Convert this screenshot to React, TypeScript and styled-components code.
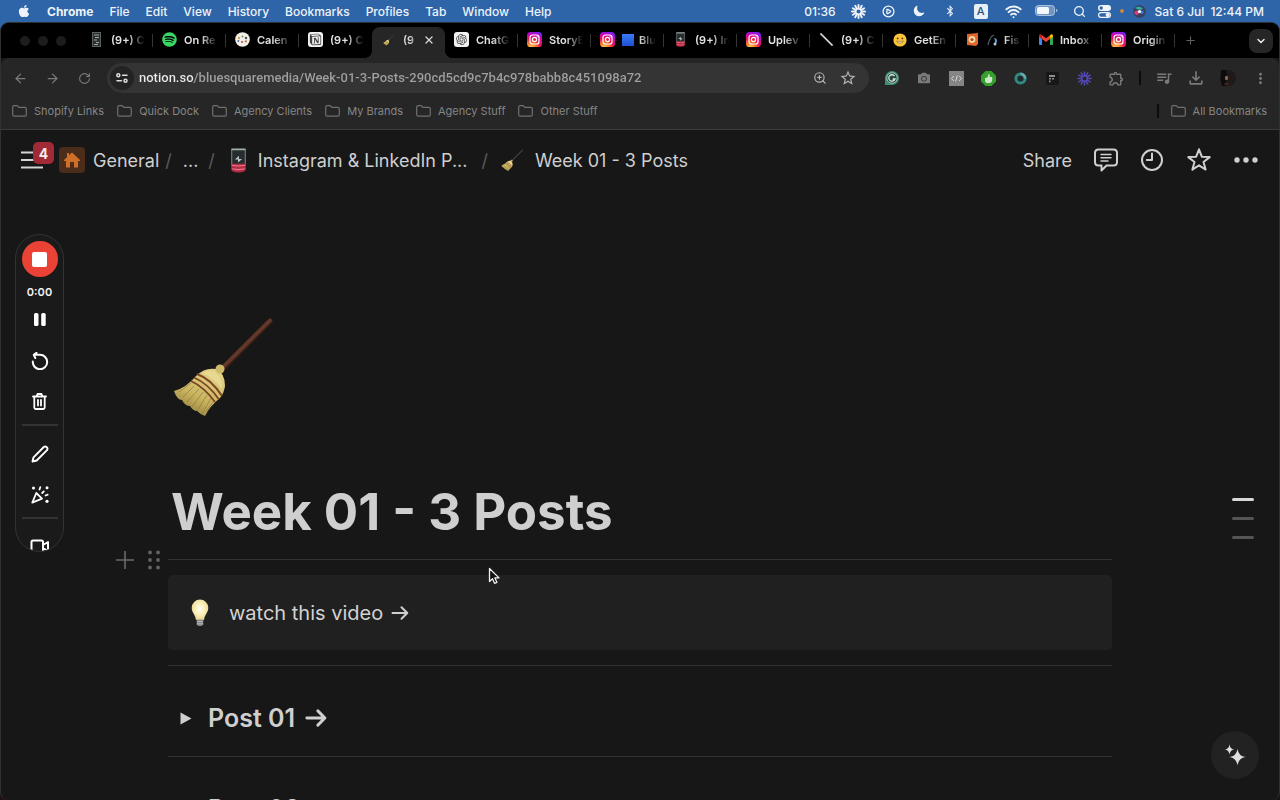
import React from "react";
import styled, { createGlobalStyle, css } from "styled-components";
import {
  ArrowLeft,
  ArrowRight,
  RotateCw,
  Search,
  Wifi,
  CirclePlay,
  ChevronDown,
  Plus,
  X,
  ZoomIn,
} from "lucide-react";
import { FaApple, FaSpotify, FaBluetoothB, FaCamera } from "react-icons/fa";
import { RiNotionFill, RiOpenaiFill } from "react-icons/ri";
import {
  MdQueueMusic,
  MdOutlineFileDownload,
  MdOutlineExtension,
  MdStarBorder,
  MdMoreVert,
} from "react-icons/md";
import { IoMoon } from "react-icons/io5";

const Global = createGlobalStyle`
  *, *::before, *::after { box-sizing: border-box; }
  html, body { margin: 0; height: 100%; }
  body {
    background: #1d1412;
    font-family: Inter, "Liberation Sans", sans-serif;
    color: #d2d2d2;
    overflow: hidden;
  }
  button, input { font: inherit; color: inherit; }
  svg { display: block; flex: none; }
`;

const Desktop = styled.div`
  display: flex;
  flex-direction: column;
  height: 100vh;
  background: linear-gradient(#2e65a8 0 60px, #1d1412 60px);
`;

const bareButton = css`
  display: flex;
  align-items: center;
  justify-content: center;
  padding: 0;
  border: 0;
  background: none;
  white-space: nowrap;
  cursor: pointer;
`;

/* ---------- macOS menu bar ---------- */

const MenuBar = styled.header`
  display: flex;
  align-items: center;
  flex: none;
  height: 22px;
  padding: 0 16px 0 17px;
  color: #eef3fa;
  font-size: 12px;
  font-weight: 500;
`;

const Menus = styled.nav`
  display: flex;
  align-items: center;
  gap: 16px;
  flex: 1;
`;

const MenuButton = styled.button<{ $strong?: boolean }>`
  ${bareButton}
  font-weight: ${(p) => (p.$strong ? 700 : 500)};
`;

const Status = styled.div`
  display: flex;
  align-items: center;
`;

const StatusSlot = styled.span<{ $w?: number }>`
  display: flex;
  align-items: center;
  justify-content: center;
  width: ${(p) => p.$w ?? 31}px;
`;

const InputSource = styled.span`
  display: grid;
  place-items: center;
  width: 14px;
  height: 15px;
  border-radius: 2px;
  background: #e8eef6;
  color: #2c4f7c;
  font-size: 11px;
`;

const DateTime = styled.time`
  display: flex;
  gap: 6px;
  white-space: nowrap;
`;

/* ---------- Browser window ---------- */

const Window = styled.div`
  position: relative;
  display: flex;
  flex-direction: column;
  flex: 1;
  min-height: 0;
  border: 1px solid #2f3133;
  border-bottom: 0;
  border-radius: 9px 9px 8px 8px;
  background: #171717;
  overflow: hidden;
`;

const TabStrip = styled.div`
  display: flex;
  align-items: stretch;
  flex: none;
  height: 35px;
  padding: 0 6px 0 19px;
  background: #000;
`;

const Lights = styled.div`
  display: flex;
  align-items: center;
  gap: 8px;
  width: 60px;
`;

const Light = styled.span`
  width: 10px;
  height: 10px;
  border-radius: 50%;
  background: #1d1d1d;
`;

const TabButton = styled.button<{ $active?: boolean; $line?: boolean }>`
  ${bareButton}
  position: relative;
  justify-content: flex-start;
  flex: 0 1 73px;
  min-width: 0;
  gap: 7px;
  padding: 0 8px 2px 9px;
  color: #e2e2e2;
  font-size: 11px;
  font-weight: 600;

  ${(p) =>
    p.$line &&
    css`
      &::after {
        content: "";
        position: absolute;
        right: 0;
        top: 11px;
        width: 1px;
        height: 13px;
        background: #353535;
      }
    `}

  ${(p) =>
    p.$active &&
    css`
      margin-top: 4px;
      border-radius: 8px 8px 0 0;
      background: #262626;
      color: #d8d8d8;
      padding-right: 10px;
      padding-bottom: 6px;
      &::before,
      &::after {
        content: "";
        position: absolute;
        bottom: 0;
        width: 8px;
        height: 8px;
      }
      &::before {
        left: -8px;
        background: radial-gradient(circle at 0 0, #000 8px, #262626 8px);
      }
      &::after {
        right: -8px;
        background: radial-gradient(circle at 100% 0, #000 8px, #262626 8px);
      }
    `}
`;

const TabText = styled.span`
  display: flex;
  align-items: center;
  gap: 5px;
  flex: 1;
  overflow: hidden;
  mask-image: linear-gradient(90deg, #000 50%, transparent 100%);
`;

const Blue = styled.span`
  flex: none;
  width: 12px;
  height: 12px;
  background: linear-gradient(#3a7af5, #1e50d8);
`;

const NewTab = styled.button`
  ${bareButton}
  width: 30px;
  color: #606060;
`;

const TabSearch = styled.button`
  ${bareButton}
  align-self: center;
  width: 24px;
  height: 24px;
  margin-left: auto;
  border-radius: 8px;
  background: #262626;
  color: #e8e8e8;
`;

const Toolbar = styled.div`
  display: flex;
  align-items: center;
  flex: none;
  height: 41px;
  padding: 0 3px 1px 3px;
  border-radius: 8px 8px 0 0;
  background: #262626;
`;

const Slot = styled.button<{ $w?: number; $c?: string }>`
  ${bareButton}
  flex: none;
  width: ${(p) => p.$w ?? 32}px;
  height: 28px;
  color: ${(p) => p.$c ?? "#7a7a7a"};
`;

const Omnibox = styled.div`
  display: flex;
  align-items: center;
  flex: 1;
  min-width: 0;
  height: 30px;
  margin: 0 7px;
  padding: 0 7px 0 3px;
  border-radius: 15px;
  background: #343434;
`;

const SiteInfo = styled.button`
  ${bareButton}
  width: 24px;
  height: 24px;
  border-radius: 50%;
  background: #232323;
`;

const UrlInput = styled.input`
  flex: 1;
  min-width: 0;
  margin-left: 5px;
  padding: 0;
  border: 0;
  outline: 0;
  font-family: Roboto, sans-serif;
  font-size: 13px;
  font-weight: 500;
  line-height: 20px;
  background: linear-gradient(90deg, #ececec 55px, #a0a0a0 55px);
  background-clip: text;
  -webkit-background-clip: text;
  -webkit-text-fill-color: transparent;
`;

const Bar = styled.span<{ $m: number }>`
  width: 2px;
  height: 14px;
  margin: 0 ${(p) => p.$m}px;
  background: #0c0c0c;
`;

const BookmarkBar = styled.nav`
  display: flex;
  align-items: center;
  gap: 13px;
  flex: none;
  height: 31px;
  padding: 0 12px 6px 11px;
  border-bottom: 1px solid #3b3b3b;
  background: #262626;
`;

const Bookmark = styled.a`
  display: flex;
  align-items: center;
  gap: 7px;
  color: #858585;
  font-size: 11px;
  text-decoration: none;
  white-space: nowrap;
`;

const BookmarkEnd = styled.div`
  display: flex;
  align-items: center;
  margin-left: auto;
`;

/* ---------- Notion page ---------- */

const TopBar = styled.div`
  display: flex;
  align-items: center;
  flex: none;
  height: 60px;
  padding: 0 21px 0 20px;
  font-size: 18px;
`;

const SidebarToggle = styled.button`
  ${bareButton}
  position: relative;
  width: 23px;
  height: 26px;
`;

const Badge = styled.span`
  position: absolute;
  left: 12px;
  top: -5px;
  display: grid;
  place-items: center;
  width: 21px;
  height: 22px;
  border-radius: 5px;
  background: #a02a36;
  color: #f5e9ea;
  font-size: 14px;
  font-weight: 700;
`;

const HomeBox = styled.span`
  display: grid;
  place-items: center;
  width: 26px;
  height: 26px;
  margin: 0 8px 0 15px;
  border-radius: 4px;
  background: #4c2d1b;
`;

const Crumb = styled.a`
  display: flex;
  align-items: center;
  gap: 11px;
  color: #cfcfcf;
  text-decoration: none;
  white-space: nowrap;
`;

const Slash = styled.span<{ $l: number; $r: number }>`
  margin: 0 ${(p) => p.$r}px 0 ${(p) => p.$l}px;
  color: #5a5a5a;
`;

const Actions = styled.div`
  display: flex;
  align-items: center;
  gap: 22px;
  margin-left: auto;
`;

const Action = styled.button`
  ${bareButton}
  color: #cfcfcf;
`;

const Page = styled.main`
  flex: 1;
  min-height: 0;
  width: 100%;
  max-width: 1280px;
  margin: 0 auto;
  padding: 126px 167px 0;
  overflow: hidden;
`;

const PageIcon = styled.div`
  padding-left: 4px;
`;

const Title = styled.h1`
  margin: 60px 0 0;
  padding-left: 3px;
  color: #cfcfcf;
  font-size: 51px;
  line-height: 64px;
  font-weight: 700;
  white-space: nowrap;
`;

const Block = styled.div`
  position: relative;
`;

const Handles = styled.div`
  position: absolute;
  right: 100%;
  top: 50%;
  display: flex;
  align-items: center;
  gap: 14px;
  padding-right: 8px;
  transform: translateY(-50%);
`;

const Rule = styled.hr`
  height: 1px;
  margin: 15px 0;
  border: 0;
  background: #323232;
`;

const Callout = styled.section`
  display: flex;
  align-items: center;
  gap: 20px;
  height: 75px;
  padding: 0 23px;
  border-radius: 5px;
  background: #202020;
  font-size: 20px;
`;

const Arrowed = styled.span<{ $gap: number }>`
  display: flex;
  align-items: center;
  gap: ${(p) => p.$gap}px;
`;

const ToggleRow = styled.button`
  ${bareButton}
  justify-content: flex-start;
  gap: 16px;
  width: 100%;
  height: 60px;
  padding: 14px 0 0 12px;
  color: #cfcfcf;
  font-size: 25px;
  font-weight: 600;
`;

/* ---------- Overlays ---------- */

const Recorder = styled.aside`
  position: absolute;
  left: 14px;
  top: 211px;
  display: flex;
  flex-direction: column;
  align-items: center;
  width: 49px;
  height: 318px;
  padding-top: 6px;
  border: 1px solid #333;
  border-radius: 25px;
  background: #1a1a1a;
  color: #f4f4f4;
  overflow: hidden;
`;

const StopButton = styled.button`
  ${bareButton}
  flex: none;
  width: 36px;
  height: 36px;
  border-radius: 50%;
  background: #ea4335;

  &::before {
    content: "";
    width: 15px;
    height: 15px;
    border-radius: 2px;
    background: #fff;
  }
`;

const Elapsed = styled.time`
  margin: 8px 0 0;
  font-size: 11px;
  line-height: 14px;
  font-weight: 600;
`;

const Tool = styled.button`
  ${bareButton}
  flex: none;
  width: 36px;
  height: 41px;
`;

const ToolRule = styled.hr`
  flex: none;
  width: 36px;
  height: 2px;
  margin: 2px 0 7px;
  border: 0;
  background: #333;
`;

const Outline = styled.nav`
  position: absolute;
  right: 25px;
  top: 475px;
  display: flex;
  flex-direction: column;
  gap: 16px;
`;

const OutlineMark = styled.a<{ $on?: boolean }>`
  width: 22px;
  height: 3px;
  border-radius: 2px;
  background: ${(p) => (p.$on ? "#d8d8d8" : "#555")};
`;

const AiButton = styled.button`
  ${bareButton}
  position: absolute;
  right: 20px;
  bottom: 21px;
  width: 48px;
  height: 48px;
  border-radius: 50%;
  background: #222;
`;

const Pointer = styled.svg`
  position: absolute;
  left: 487px;
  top: 544px;
`;

/* ---------- Drawings ---------- */

const Folder = () => (
  <svg width="15" height="12" viewBox="0 0 15 12" fill="none" stroke="#707070" strokeWidth="1.2" strokeLinejoin="round">
    <path d="M.7 2.2q0-1.5 1.5-1.5h2.6q.6 0 1 .5l1 1.2h6q1.5 0 1.5 1.5v5.8q0 1.5-1.5 1.5H2.2q-1.5 0-1.5-1.5z" />
  </svg>
);

const Insta = () => (
  <svg width="15" height="15" viewBox="0 0 15 15">
    <defs>
      <radialGradient id="ig" cx=".28" cy="1.05" r="1.1">
        <stop offset="0" stopColor="#ffd45a" />
        <stop offset=".3" stopColor="#fb7a2c" />
        <stop offset=".55" stopColor="#e8184f" />
        <stop offset=".8" stopColor="#d400b8" />
        <stop offset="1" stopColor="#7a1ff0" />
      </radialGradient>
    </defs>
    <rect width="15" height="15" rx="3.6" fill="url(#ig)" />
    <rect x="3" y="3" width="9" height="9" rx="2.6" fill="none" stroke="#fff" strokeWidth="1.2" />
    <circle cx="7.5" cy="7.5" r="2.1" fill="none" stroke="#fff" strokeWidth="1.2" />
    <circle cx="10.1" cy="4.9" r=".6" fill="#fff" />
  </svg>
);

const Broom = ({ size, handle = "#63382b", edge = "#3a1f17" }: { size: number; handle?: string; edge?: string }) => (
  <svg width={size} height={size} viewBox="0 0 104 104">
    <defs>
      <linearGradient id="straw" x1=".75" y1=".1" x2=".25" y2="1">
        <stop offset="0" stopColor="#e2d184" />
        <stop offset=".55" stopColor="#c9b45f" />
        <stop offset="1" stopColor="#8f7c3a" />
      </linearGradient>
    </defs>
    <path d="M49 54 98 5" stroke={edge} strokeWidth="5.500" strokeLinecap="round" />
    <path d="M49 53 98 4.500" stroke={handle} strokeWidth="3.600" strokeLinecap="round" />
    <path d="M24 60q9-9 20-7 9 4 9 17-1 7-5 12-10 8-15 18-4-1-8-5-4 0-7-5-5 0-8-6-5 0-8-9 12-3 22-15z" fill="url(#straw)" />
    <path d="M30 57q8-4 14 0 7 7 6 16-8-11-20-16z" fill="#eadb96" opacity=".8" />
    <path
      d="M19 67 7 76M22 70 11 81M27 73 15 86M31 76 20 91M35 79 25 95M39 82 30 98M42 84 34 96"
      stroke="#86733a"
      strokeWidth="1"
      fill="none"
      opacity=".6"
    />
    <path d="M25 58q14 5 25 22M22 61.500q14 6 25 22M19 65q13 6 24 21" stroke="#7c4526" strokeWidth="1.900" fill="none" />
    <circle cx="48" cy="53" r="4.500" fill="#cdbb6c" />
  </svg>
);

const PhoneLow = ({ w, h }: { w: number; h: number }) => (
  <svg width={w} height={h} viewBox="0 0 16 24">
    <path d="M1.500 1h13v15h-13z" fill="#262d2e" stroke="#7d8485" />
    <path d="M1.500 1.500h13" stroke="#a6adad" strokeWidth="1.500" />
    <path d="M1 15h14v5.500Q15 23.500 8 23.500t-7-3z" fill="#b92a44" />
    <path d="M1.500 16.500q6.500 1.500 13 0M2 20q6 1.500 12 0" stroke="#e08391" fill="none" strokeWidth="1" />
    <path d="M4.500 11 8.500 7.500v3H11.500L7.500 14v-3z" fill="#bfc3c3" />
  </svg>
);

const Starburst = ({ size, color, width = 2 }: { size: number; color: string; width?: number }) => (
  <svg width={size} height={size} viewBox="-8 -8 16 16" stroke={color} strokeWidth={width} strokeLinecap="round">
    {Array.from({ length: 12 }, (_, i) => (
      <path key={i} d="M0-3.500V-7" transform={`rotate(${i * 30})`} />
    ))}
    <circle r="3" fill="none" strokeWidth="1.600" />
  </svg>
);

const MiniPanel = () => (
  <svg width="9" height="15" viewBox="0 0 9 15">
    <rect x=".5" y=".5" width="8" height="14" fill="#2b2f2e" stroke="#5c605f" />
    <path d="M2 3h5M3 5.500h4M2 8h3M4 10.500h3M2 12.500h4" stroke="#a2a8a6" strokeWidth="1" />
  </svg>
);

const CalendarDots = () => (
  <svg width="15" height="15" viewBox="0 0 15 15">
    <circle cx="7.500" cy="7.500" r="7.300" fill="#f3f0ea" />
    <circle cx="4" cy="6" r="1.200" fill="#d9a24a" />
    <circle cx="7.500" cy="4.500" r="1" fill="#6a9a58" />
    <circle cx="11" cy="6" r="1.200" fill="#4b4b4b" />
    <circle cx="3.400" cy="9" r="1" fill="#4d6f9a" />
    <circle cx="7" cy="10" r="1.100" fill="#c0504a" />
    <circle cx="10.800" cy="9.300" r="1.100" fill="#c0783a" />
  </svg>
);

const White = styled.span`
  display: grid;
  place-items: center;
  flex: none;
  width: 15px;
  height: 15px;
  border-radius: 3px;
  background: #f1f1f1;
  color: #444;
`;

const Smile = () => (
  <svg width="14" height="14" viewBox="0 0 14 14">
    <circle cx="7" cy="7" r="6.600" fill="#f8c43a" />
    <circle cx="4.600" cy="5.400" r=".9" fill="#5b3a10" />
    <circle cx="9.400" cy="5.400" r=".9" fill="#5b3a10" />
    <path d="M3.500 8.300q3.500 3.600 7 0z" fill="#fff" stroke="#8a5415" strokeWidth=".6" />
  </svg>
);

const Book = () => (
  <svg width="13" height="15" viewBox="0 0 13 15">
    <path d="M1 2l11-1v11l-2 2-9-1z" fill="#e0662b" />
    <circle cx="6" cy="7.500" r="3.400" fill="#f4d9a2" />
    <circle cx="6" cy="7.500" r="1.600" fill="#b1512b" />
  </svg>
);

const Gmail = () => (
  <svg width="14" height="11" viewBox="0 0 14 11">
    <path d="M0 1.500V10q0 1 1 1h2V5z" fill="#4285f4" />
    <path d="M14 1.500V10q0 1-1 1h-2V5z" fill="#34a853" />
    <path d="M3 5V1.200l4 3 4-3V5L7 8z" fill="#ea4335" />
    <path d="M0 1.500Q.2 0 1.800.3L3 1.200V5L0 2.800z" fill="#c5221f" />
    <path d="M14 1.500Q13.800 0 12.200.3L11 1.200V5l3-2.200z" fill="#fbbc04" />
  </svg>
);

const Wand = () => (
  <svg width="15" height="15" viewBox="0 0 15 15">
    <path d="M1.500 1.500l12 12" stroke="#8b8b8b" strokeWidth="2.200" />
    <path d="M1.500 1.500l12 12" stroke="#efefef" strokeWidth="1" />
  </svg>
);

const Fishing = () => (
  <svg width="12" height="14" viewBox="0 0 12 14" fill="none">
    <path d="M1 12Q3 3 7 2" stroke="#53606a" strokeWidth="1.200" />
    <path d="M7 5q3 0 3 3t-3 3q2-3 0-6z" fill="#5f9bd6" />
    <circle cx="8" cy="11" r="1.500" fill="#a9c4de" />
  </svg>
);

const Battery = () => (
  <svg width="23" height="12" viewBox="0 0 23 12">
    <rect x=".5" y=".5" width="19" height="10" rx="3" fill="#6d96c6" stroke="#a8c2e0" />
    <rect x="2" y="2" width="12" height="7" rx="1.500" fill="#f4f8fc" />
    <path d="M21 4v3q1.500-.3 1.500-1.500T21 4z" fill="#a8c2e0" />
  </svg>
);

const ControlCentre = () => (
  <svg width="13" height="13" viewBox="0 0 13 13">
    <rect y="0" width="13" height="6" rx="3" fill="#f1f5fa" />
    <circle cx="3.200" cy="3" r="1.700" fill="#2e65a8" />
    <rect x=".6" y="7.600" width="11.800" height="4.800" rx="2.400" fill="none" stroke="#f1f5fa" strokeWidth="1.200" />
    <circle cx="9.600" cy="10" r="2" fill="#f1f5fa" />
  </svg>
);

const Siri = () => (
  <svg width="13" height="13" viewBox="0 0 13 13">
    <circle cx="6.500" cy="6.500" r="6.300" fill="#37415f" />
    <path d="M2 3q5-3 8 1-4 2-8-1z" fill="#2fb39c" />
    <path d="M1 7q4-3 6 0-2 5-5 2z" fill="#d4437a" />
    <path d="M6 7q3-3 5 0-2 4-5 0z" fill="#3a7be0" />
    <circle cx="6.500" cy="6.500" r="1.600" fill="#fff" />
  </svg>
);

const Tune = () => (
  <svg width="12" height="10" viewBox="0 0 12 10" fill="none" stroke="#dcdcdc" strokeWidth="1.500" strokeLinecap="round">
    <circle cx="2.300" cy="2.300" r="1.500" />
    <path d="M6.500 2.300H11M1 7.700h4.500" />
    <circle cx="9.500" cy="7.700" r="1.500" />
  </svg>
);

const Grammarly = () => (
  <svg width="16" height="16" viewBox="0 0 16 16" fill="none">
    <path d="M1 8a7 7 0 1 1 7 7H1z" fill="#3f8f72" />
    <circle cx="8" cy="8" r="5.200" fill="#26483d" stroke="#b9d6ca" strokeWidth=".8" />
    <path d="M10.500 6A3.200 3.200 0 1 0 11 9H8.600" stroke="#d7e8e0" strokeWidth="1.300" />
  </svg>
);

const CodeTile = () => (
  <svg width="15" height="15" viewBox="0 0 15 15" fill="none">
    <rect width="15" height="15" fill="#858585" />
    <path d="M4.800 5 2.500 7.500 4.800 10M10.200 5l2.300 2.500-2.300 2.500M8.400 4.500 6.600 10.500" stroke="#d8d8d8" strokeWidth="1" />
  </svg>
);

const Thumb = () => (
  <svg width="15" height="15" viewBox="0 0 15 15">
    <path d="M4.500 0h6L15 4.500v6L10.500 15h-6L0 10.500v-6z" fill="#35a02c" />
    <path d="M4 7l2.500-.5L7.500 3q1.500 0 1.200 3H11q.8 1-.3 5L9 12H5.500L4 10.500z" fill="#cfe6cb" />
  </svg>
);

const TealRing = () => (
  <svg width="13" height="13" viewBox="0 0 13 13">
    <circle cx="6.500" cy="6.500" r="4.600" fill="#1f2a2c" stroke="#2f8a80" strokeWidth="3" />
    <path d="M6.500 1.900a4.600 4.600 0 0 1 4.600 4.600" fill="none" stroke="#67a9b0" strokeWidth="2.600" />
  </svg>
);

const DarkTile = () => (
  <svg width="13" height="13" viewBox="0 0 13 13">
    <rect width="13" height="13" rx="2" fill="#171717" />
    <path d="M3 3h6v2H3zM3 6h2v1.600H3zM6 6h2v1.600H6zM3 8.600h1.600v1.600H3z" fill="#8f8f8f" />
  </svg>
);

const Avatar = () => (
  <svg width="16" height="16" viewBox="0 0 16 16">
    <circle cx="8" cy="8" r="8" fill="#1f1a19" />
    <path d="M1 0h5q2 5 0 16H2q-2-6-1-16z" fill="#0d0b0b" />
    <ellipse cx="6.500" cy="8" rx="1.600" ry="2.300" fill="#8c6650" />
    <path d="M4 15q2-6 5.500 0z" fill="#3d2520" />
  </svg>
);

const ArrowGlyph = ({ w, s }: { w: number; s: number }) => (
  <svg width={w} height={w} viewBox="0 0 18 18" fill="none" stroke="#cfcfcf" strokeWidth={s} strokeLinecap="round" strokeLinejoin="round">
    <path d="M1.500 9h14.500M10.500 3.200 16.300 9l-5.800 5.800" />
  </svg>
);

const Bulb = () => (
  <svg width="18" height="28" viewBox="0 0 18 28">
    <defs>
      <radialGradient id="glow" cx=".5" cy=".45" r=".6">
        <stop offset="0" stopColor="#fffdf0" />
        <stop offset=".5" stopColor="#fbf0b8" />
        <stop offset="1" stopColor="#e8cf85" />
      </radialGradient>
    </defs>
    <path d="M9 .5a8.300 8.300 0 0 1 8.300 8.300c0 5-3.600 6.500-4.300 12.200H5C4.300 15.300.7 13.800.7 8.800A8.300 8.300 0 0 1 9 .5z" fill="url(#glow)" />
    <path d="M5.800 20.500h6.400v5q-.8 1.500-3.200 1.500t-3.200-1.500z" fill="#8b8a90" />
    <path d="M5.800 22.500h6.400M5.800 24.700h6.400" stroke="#b9b8bd" strokeWidth=".8" />
  </svg>
);

const tabs: { icon: React.ReactNode; text: React.ReactNode; line?: boolean; active?: boolean }[] = [
  { icon: <MiniPanel />, text: "(9+) C", line: true },
  { icon: <FaSpotify size={15} color="#3bd564" />, text: "On Re", line: true },
  { icon: <CalendarDots />, text: "Calen", line: true },
  { icon: <White><RiNotionFill size={15} /></White>, text: "(9+) C" },
  { icon: <Broom size={12} handle="#5a5654" edge="#2c2a29" />, text: "(9", active: true },
  { icon: <White><RiOpenaiFill size={13} /></White>, text: "ChatG", line: true },
  { icon: <Insta />, text: "StoryE", line: true },
  { icon: <Insta />, text: <><Blue />Blu</>, line: true },
  { icon: <PhoneLow w={11} h={15} />, text: "(9+) In", line: true },
  { icon: <Insta />, text: "Uplev", line: true },
  { icon: <Wand />, text: "(9+) C", line: true },
  { icon: <Smile />, text: "GetEn", line: true },
  { icon: <Book />, text: <><Fishing />Fis</>, line: true },
  { icon: <Gmail />, text: "Inbox", line: true },
  { icon: <Insta />, text: "Origin", line: true },
];

const IconCell = styled.span`
  display: grid;
  place-items: center;
  flex: none;
  width: 15px;
`;

const TabClose = styled.span`
  display: grid;
  margin-left: -2px;
`;

const ToggleTriangle = () => (
  <svg width="12" height="14" viewBox="0 0 12 14">
    <path d="M.5 1.500v12l11-6z" fill="#cfcfcf" />
  </svg>
);

export default function App() {
  return (
    <>
      <Global />
      <Desktop>
        <MenuBar>
          <Menus>
            <MenuButton aria-label="Apple menu"><FaApple size={14} /></MenuButton>
            {["Chrome", "File", "Edit", "View", "History", "Bookmarks", "Profiles", "Tab", "Window", "Help"].map((m, i) => (
              <MenuButton key={m} $strong={i === 0}>{m}</MenuButton>
            ))}
          </Menus>
          <Status>
            <span>01:36</span>
            <StatusSlot $w={46}><Starburst size={15} color="#f0f4fa" /></StatusSlot>
            <StatusSlot $w={14}><CirclePlay size={13} strokeWidth={2.4} /></StatusSlot>
            <StatusSlot $w={46}><IoMoon size={12} /></StatusSlot>
            <StatusSlot $w={16}><FaBluetoothB size={12} /></StatusSlot>
            <StatusSlot $w={46}><InputSource>A</InputSource></StatusSlot>
            <StatusSlot $w={20}><Wifi size={17} strokeWidth={2.8} /></StatusSlot>
            <StatusSlot $w={46}><Battery /></StatusSlot>
            <StatusSlot $w={20}><Search size={13} strokeWidth={2.4} /></StatusSlot>
            <StatusSlot $w={30}><ControlCentre /></StatusSlot>
            <svg width="4" height="4" viewBox="0 0 4 4"><circle cx="2" cy="2" r="2" fill="#c98a3a" /></svg>
            <StatusSlot><Siri /></StatusSlot>
            <DateTime><span>Sat 6 Jul</span><span>12:44 PM</span></DateTime>
          </Status>
        </MenuBar>

        <Window>
          <TabStrip>
            <Lights><Light /><Light /><Light /></Lights>
            {tabs.map((t, i) => (
              <TabButton key={i} $active={t.active} $line={t.line}>
                <IconCell>{t.icon}</IconCell>
                <TabText>{t.text}</TabText>
                {t.active && <TabClose><X size={12} strokeWidth={2.6} /></TabClose>}
              </TabButton>
            ))}
            <NewTab aria-label="New tab"><Plus size={13} /></NewTab>
            <TabSearch aria-label="Search tabs"><ChevronDown size={12} strokeWidth={3} /></TabSearch>
          </TabStrip>

          <Toolbar>
            <Slot aria-label="Back"><ArrowLeft size={15} /></Slot>
            <Slot aria-label="Forward"><ArrowRight size={15} /></Slot>
            <Slot aria-label="Reload"><RotateCw size={13} /></Slot>
            <Omnibox>
              <SiteInfo aria-label="Site information"><Tune /></SiteInfo>
              <UrlInput
                aria-label="Address"
                defaultValue="notion.so/bluesquaremedia/Week-01-3-Posts-290cd5cd9c7b4c978babb8c451098a72"
              />
              <Slot $w={28} $c="#b4b4b4" aria-label="Zoom"><ZoomIn size={14} /></Slot>
              <Slot $w={28} $c="#b4b4b4" aria-label="Bookmark this tab"><MdStarBorder size={18} /></Slot>
            </Omnibox>
            <Slot aria-label="Grammarly"><Grammarly /></Slot>
            <Slot aria-label="Screenshot"><FaCamera size={12} /></Slot>
            <Slot aria-label="Code"><CodeTile /></Slot>
            <Slot aria-label="Thumb"><Thumb /></Slot>
            <Slot aria-label="Ring"><TealRing /></Slot>
            <Slot aria-label="Font"><DarkTile /></Slot>
            <Slot aria-label="Loom"><Starburst size={15} color="#5548b8" width={1.6} /></Slot>
            <Slot aria-label="Extensions"><MdOutlineExtension size={17} /></Slot>
            <Bar $m={7} />
            <Slot aria-label="Media"><MdQueueMusic size={18} /></Slot>
            <Slot aria-label="Downloads"><MdOutlineFileDownload size={20} /></Slot>
            <Slot aria-label="Profile"><Avatar /></Slot>
            <Slot aria-label="Menu"><MdMoreVert size={17} /></Slot>
          </Toolbar>

          <BookmarkBar>
            {["Shopify Links", "Quick Dock", "Agency Clients", "My Brands", "Agency Stuff", "Other Stuff"].map((b) => (
              <Bookmark key={b} href="#"><Folder />{b}</Bookmark>
            ))}
            <BookmarkEnd>
              <Bar $m={12} />
              <Bookmark href="#"><Folder />All Bookmarks</Bookmark>
            </BookmarkEnd>
          </BookmarkBar>

          <TopBar>
            <SidebarToggle aria-label="Open sidebar">
              <svg width="23" height="18" viewBox="0 0 23 18" stroke="#d4d4d4" strokeWidth="2"><path d="M0 1.500h22M0 9h22M0 16.500h22" /></svg>
              <Badge>4</Badge>
            </SidebarToggle>
            <HomeBox>
              <svg width="18" height="16" viewBox="0 0 18 16"><path d="M9 .5 17 8v1h-2v6.500h-4V10H7v5.500H3V9H1V8l3-2.800V1h2v2.300z" fill="#cf6f28" /></svg>
            </HomeBox>
            <Crumb href="#">General</Crumb>
            <Slash $l={6} $r={11}>/</Slash>
            <Crumb href="#">...</Crumb>
            <Slash $l={10} $r={15}>/</Slash>
            <Crumb href="#"><PhoneLow w={17} h={25} />Instagram &amp; LinkedIn P...</Crumb>
            <Slash $l={14} $r={13}>/</Slash>
            <Crumb href="#"><Broom size={23} handle="#5a5654" edge="#2c2a29" />Week 01 - 3 Posts</Crumb>
            <Actions>
              <Action>Share</Action>
              <Action aria-label="Comments">
                <svg width="24" height="24" viewBox="0 0 24 24" fill="none" stroke="currentColor" strokeWidth="2" strokeLinejoin="round" strokeLinecap="round">
                  <path d="M4.500 1.500h15Q23 1.500 23 5v9q0 3.500-3.500 3.500h-7L7.500 22.500v-5h-3Q1 17.500 1 14V5Q1 1.500 4.500 1.500z" />
                  <path d="M7 6.500h10M7 9.800h10M7 13h7" strokeWidth="1.500" />
                </svg>
              </Action>
              <Action aria-label="Updates">
                <svg width="24" height="24" viewBox="0 0 24 24" fill="none" stroke="currentColor" strokeWidth="2" strokeLinecap="round" strokeLinejoin="round">
                  <circle cx="12" cy="12" r="10" /><path d="M12 5.500V12H6.800" />
                </svg>
              </Action>
              <Action aria-label="Favorite">
                <svg width="26" height="24" viewBox="0 0 26 24" fill="none" stroke="currentColor" strokeWidth="2" strokeLinejoin="round">
                  <path d="M13 1.300l2.800 7.400 7.900.4-6.200 4.900 2.100 7.600-6.600-4.300-6.600 4.300 2.100-7.600-6.200-4.900 7.900-.4z" />
                </svg>
              </Action>
              <Action aria-label="More">
                <svg width="24" height="6" viewBox="0 0 24 6" fill="currentColor"><circle cx="3" cy="3" r="2.700" /><circle cx="12" cy="3" r="2.700" /><circle cx="21" cy="3" r="2.700" /></svg>
              </Action>
            </Actions>
          </TopBar>

          <Page>
            <PageIcon><Broom size={104} /></PageIcon>
            <Title>Week 01 - 3 Posts</Title>
            <Block>
              <Handles>
                <svg width="18" height="18" viewBox="0 0 18 18" stroke="#6a6a6a" strokeWidth="1.600"><path d="M9 0v18M0 9h18" /></svg>
                <svg width="12" height="20" viewBox="0 0 12 20" fill="#626262">
                  {[2.5, 10, 17.5].map((y) => (
                    <React.Fragment key={y}><circle cx="2" cy={y} r="1.900" /><circle cx="10" cy={y} r="1.900" /></React.Fragment>
                  ))}
                </svg>
              </Handles>
              <Rule />
            </Block>
            <Callout>
              <Bulb />
              <Arrowed $gap={8}>watch this video <ArrowGlyph w={18} s={2} /></Arrowed>
            </Callout>
            <Rule />
            <ToggleRow><ToggleTriangle /><Arrowed $gap={10}>Post 01 <ArrowGlyph w={22} s={2.4} /></Arrowed></ToggleRow>
            <Rule />
            <ToggleRow><ToggleTriangle /><Arrowed $gap={10}>Post 02 <ArrowGlyph w={22} s={2.4} /></Arrowed></ToggleRow>
          </Page>

          <Recorder>
            <StopButton aria-label="Stop recording" />
            <Elapsed>0:00</Elapsed>
            <Tool aria-label="Pause">
              <svg width="12" height="13" viewBox="0 0 12 13" fill="#fff"><rect width="4.500" height="13" rx="1.600" /><rect x="7.200" width="4.500" height="13" rx="1.600" /></svg>
            </Tool>
            <Tool aria-label="Restart">
              <svg width="18" height="18" viewBox="0 0 18 18" fill="none" stroke="#fff" strokeWidth="2" strokeLinecap="round" strokeLinejoin="round">
                <path d="M1.800 9.500A7.200 7.200 0 1 0 9 2.800H3.200M5.500.9 2.800 2.900 4.300 6" />
              </svg>
            </Tool>
            <Tool aria-label="Delete">
              <svg width="15" height="17" viewBox="0 0 15 17" fill="none" stroke="#fff" strokeWidth="1.800" strokeLinecap="round" strokeLinejoin="round">
                <path d="M1 3.500h13M4.500 3.500 5.500 1h4l1 2.500M2.300 3.500v11q0 1.500 1.500 1.500h7.400q1.500 0 1.500-1.500v-11M6 7v5.500M9 7v5.500" />
              </svg>
            </Tool>
            <ToolRule />
            <Tool aria-label="Draw">
              <svg width="18" height="18" viewBox="0 0 18 18" fill="none" stroke="#fff" strokeWidth="1.900" strokeLinejoin="round">
                <path d="M1.500 16.500l1-4.200L12.800 2q1.500-1.200 2.900.2t.3 3L5.700 15.500z" />
              </svg>
            </Tool>
            <Tool aria-label="Effects">
              <svg width="18" height="18" viewBox="0 0 18 18" fill="none" stroke="#fff" strokeWidth="1.800" strokeLinejoin="round" strokeLinecap="round">
                <path d="M5.300 7 1.300 16.700 11 12.700z" />
                <path d="M8.500 3.500 9.300 1.200M11.200 7l1.600-1.600M14.500 9.500l2.200-.8" />
                <g fill="#fff" stroke="none"><circle cx="2.500" cy="2" r="1.500" /><circle cx="16" cy="1.700" r="1.500" /><circle cx="16" cy="15.300" r="1.600" /></g>
              </svg>
            </Tool>
            <ToolRule />
            <Tool aria-label="Camera">
              <svg width="20" height="15" viewBox="0 0 20 15" fill="none" stroke="#fff" strokeWidth="2" strokeLinejoin="round">
                <path d="M3 1.500h8.500q1.500 0 1.500 1.500v9q0 1.500-1.500 1.500H3Q1.500 13.500 1.500 12V3Q1.500 1.500 3 1.500zM13 6l5-3v9l-5-3z" />
              </svg>
            </Tool>
          </Recorder>

          <Outline aria-label="Outline">
            <OutlineMark href="#" $on />
            <OutlineMark href="#" />
            <OutlineMark href="#" />
          </Outline>

          <AiButton aria-label="Ask AI">
            <svg width="22" height="22" viewBox="0 0 22 22" fill="#dedede">
              <path d="M5.500.5Q6.200 5 10 5.600 6.200 6.200 5.500 10.500 4.800 6.200 1 5.600 4.800 5 5.500.5z" />
              <path d="M13.500 5q1 7 8 8-7 1-8 8.500-1-7.500-8-8.500 7-1 8-8z" />
            </svg>
          </AiButton>

          <Pointer width="13" height="18" viewBox="0 0 13 18">
            <path d="M1.500 1.500v13l3-2.700 2 4.500 2.400-1-2-4.400h4.100z" fill="#111" stroke="#eee" strokeWidth="1.300" strokeLinejoin="round" />
          </Pointer>
        </Window>
      </Desktop>
    </>
  );
}
